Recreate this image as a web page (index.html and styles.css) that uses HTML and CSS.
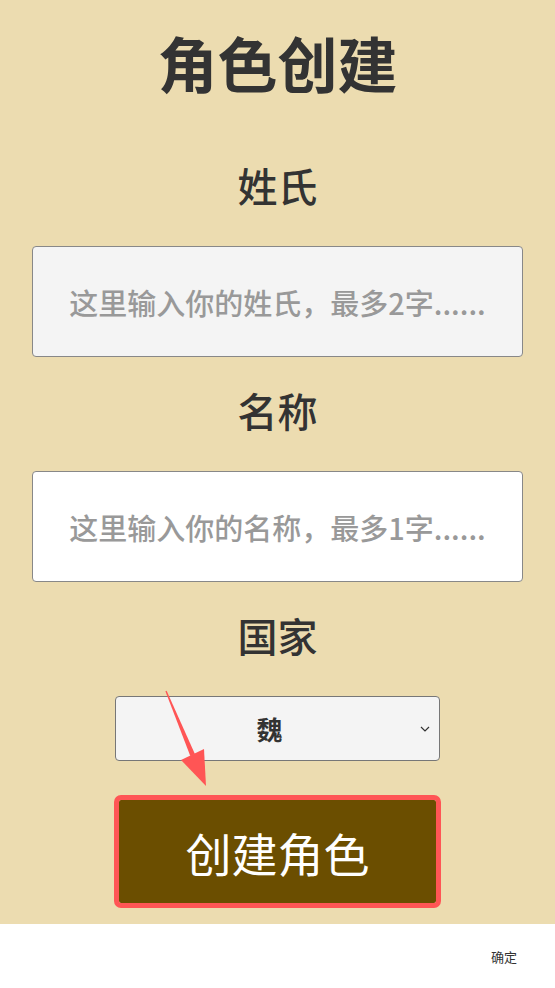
FILE: index.html
```html
<!DOCTYPE html>
<html lang="zh-CN">
<head>
<meta charset="utf-8">
<title>角色创建</title>
<link rel="stylesheet" href="styles.css">
</head>
<body>
<div class="page">
  <main class="panel">
    <h1 class="title">角色创建</h1>
    <label class="label" for="surname">姓氏</label>
    <input id="surname" class="field field-grey" type="text" placeholder="这里输入你的姓氏，最多2字......">
    <label class="label label-after" for="name">名称</label>
    <input id="name" class="field" type="text" placeholder="这里输入你的名称，最多1字......">
    <label class="label label-after" for="country">国家</label>
    <div class="select-wrap">
      <select id="country" class="select">
        <option>魏</option>
        <option>蜀</option>
        <option>吴</option>
      </select>
      <svg class="chevron" width="10" height="6" viewBox="0 0 10 6">
        <polyline points="1,1 5,5 9,1" fill="none" stroke="#333" stroke-width="1.2"/>
      </svg>
    </div>
    <button class="create" type="button">创建角色</button>
  </main>
  <footer class="footer">
    <span class="confirm">确定</span>
  </footer>
  <svg class="arrow" width="50" height="105" viewBox="0 0 50 105">
    <polygon points="5.4,6.2 6.6,5.8 34.9,69 30.3,71" fill="#ff5555"/>
    <polygon points="21,75 44,64 46,101" fill="#ff5555"/>
  </svg>
</div>
</body>
</html>
```
FILE: styles.css
```css
* { box-sizing: border-box; }
html, body { margin: 0; padding: 0; }
body {
  font-family: "Noto Sans CJK SC", "Noto Sans", sans-serif;
  color: #333;
  background: #ffffff;
}
.page {
  position: relative;
  width: 555px;
  height: 988px;
  display: flex;
  flex-direction: column;
}
.panel {
  height: 924px;
  background: #ecdcb0;
  display: flex;
  flex-direction: column;
  align-items: center;
  padding-top: 32px;
}
.title {
  margin: 0;
  font-size: 60px;
  line-height: 60px;
  font-weight: 700;
  color: #333;
}
.label {
  display: block;
  margin-top: 73px;
  margin-bottom: 41px;
  font-size: 40px;
  line-height: 40px;
  font-weight: 500;
  color: #333;
}
.label-after { margin-top: 33px; }
.field {
  width: 491px;
  height: 111px;
  border: 1px solid #888;
  border-radius: 4px;
  background: #fff;
  font-family: "Noto Sans CJK SC", sans-serif;
  font-size: 29px;
  font-weight: 500;
  text-align: center;
  color: #333;
  padding: 0 12px;
  outline: none;
}
.field-grey { background: #f4f4f4; }
.field::placeholder { color: #999; }
.select-wrap {
  position: relative;
  width: 325px;
  height: 65px;
}
.select {
  appearance: none;
  -webkit-appearance: none;
  width: 100%;
  height: 100%;
  border: 1px solid #777;
  border-radius: 4px;
  background-color: #f4f4f4;
  font-family: "Noto Sans CJK SC", sans-serif;
  font-size: 26px;
  font-weight: 700;
  color: #333;
  padding: 0 30px 0 14px;
  text-align: center;
  text-align-last: center;
}
.chevron {
  position: absolute;
  right: 10px;
  top: 30px;
  pointer-events: none;
}
.create {
  margin-top: 39px;
  width: 317px;
  height: 103px;
  border: none;
  border-radius: 2px;
  background: #6b4e00;
  color: #fff;
  font-family: "Noto Sans CJK SC", sans-serif;
  font-size: 46px;
  font-weight: 400;
  outline: 5px solid #ff5555;
  box-shadow: 0 -1px 0 #d8c8a0;
}
.footer {
  height: 64px;
  background: #fff;
  display: flex;
  align-items: center;
  justify-content: flex-end;
  padding-right: 38px;
}
.confirm {
  font-size: 13px;
  color: #333;
}
.arrow {
  position: absolute;
  left: 160px;
  top: 685px;
  pointer-events: none;
}
```
